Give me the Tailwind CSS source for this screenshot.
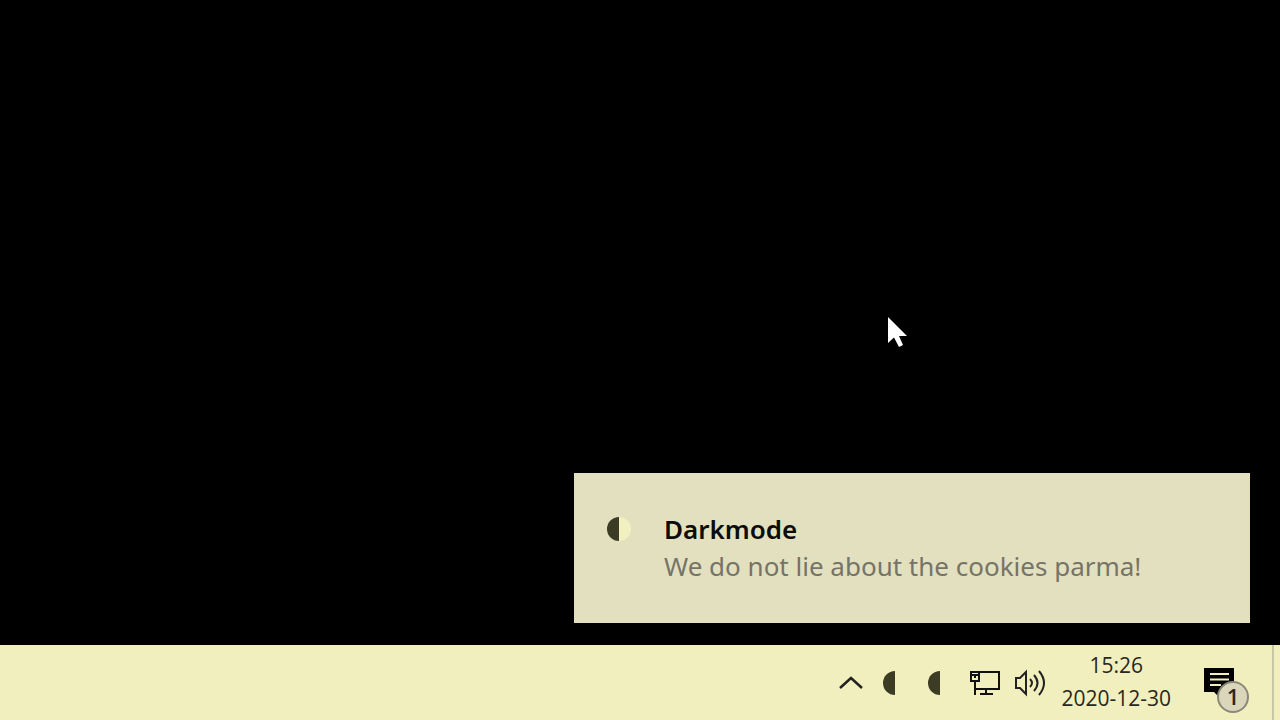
<!DOCTYPE html>
<html lang="en">
<head>
<meta charset="utf-8">
<title>Darkmode notification</title>
<script src="https://cdn.jsdelivr.net/npm/@tailwindcss/browser@4"></script>
</head>
<body class="min-h-screen bg-black font-['Open_Sans','Noto_Sans',sans-serif] flex flex-col">
<main class="relative flex-1 flex flex-col items-end justify-end pr-[30px] pb-[22px]">
  <svg class="absolute left-[887px] top-[316px]" width="21" height="32" viewBox="0 0 21 32" aria-hidden="true"><path d="M1 1V27L7 21.500L12 31L16 29L12 20H20Z" fill="#fff"/></svg>
  <section class="w-full max-w-[676px] min-h-[150px] bg-[#e3e0c0] flex items-start pl-[33px] pt-[38px]" role="status">
    <svg class="mt-[6px] shrink-0" width="24" height="24" viewBox="0 0 24 24" aria-hidden="true"><path d="M12 0A12 12 0 0 1 12 24Z" fill="#f2efc0"/><path d="M12 0A12 12 0 0 0 12 24Z" fill="#3c3b24"/></svg>
    <div class="ml-[33px] font-['Noto_Sans',sans-serif] text-[26px] leading-[37px] whitespace-nowrap">
      <h1 class="font-semibold text-[#0c0c0a]">Darkmode</h1>
      <p class="text-[#757466]">We do not lie about the cookies parma!</p>
    </div>
  </section>
</main>
<footer class="h-[75px] bg-[#f2efbe] flex items-center justify-end text-[#282820]">
  <button class="mr-[20px]" aria-label="Show hidden icons"><svg class="block" width="24" height="16" viewBox="0 0 24 16" fill="none" stroke="#222" stroke-width="2.500"><path d="M1 13L12 3L23 13"/></svg></button>
  <button class="mr-[21px]" aria-label="Darkmode"><svg class="block" width="24" height="24" viewBox="0 0 24 24"><path d="M12 0A12 12 0 0 0 12 24Z" fill="#3c3b24"/></svg></button>
  <button class="mr-[17px]" aria-label="Darkmode"><svg class="block" width="24" height="24" viewBox="0 0 24 24"><path d="M12 0A12 12 0 0 0 12 24Z" fill="#3c3b24"/></svg></button>
  <button class="mr-[13px]" aria-label="Network"><svg class="block" width="32" height="26" viewBox="0 0 32 26" fill="none" stroke="#111" stroke-width="2"><path d="M10 2H30V19H6M17 19V24M11 24H24M2 2H10V11H2ZM2 5H10M6 5V8M6 11V25"/></svg></button>
  <button class="mr-[15px]" aria-label="Volume"><svg class="block" width="32" height="28" viewBox="0 0 32 28" fill="none" stroke="#222" stroke-width="2"><path d="M2 9H6L12 3V25L6 19H2ZM16 10Q20 14 16 18M20 6Q27 14 20 22M25 2Q35 14 25 26"/></svg></button>
  <button class="mr-[32px] pb-px text-[21px] leading-[33px] text-center"><time datetime="2020-12-30T15:26"><span class="block">15:26</span><span class="block">2020-12-30</span></time></button>
  <button class="relative mt-[14px] mr-[23px]" aria-label="Notifications, 1 new"><svg class="block" width="46" height="46" viewBox="0 0 46 46"><path d="M1 1H31V25H16V30L11 25H1Z" fill="#000"/><path d="M7 7H26M7 12.500H26M7 18H18" stroke="#f2efbe" stroke-width="2"/><circle cx="30" cy="30" r="15" fill="#d9d6bc" stroke="#8a8878" stroke-width="2"/></svg><span class="absolute left-[15px] top-[14px] w-[30px] text-center text-[22px] leading-[30px] font-semibold">1</span></button>
  <div class="w-2 self-stretch border-l-2 border-[#c8c6a8]"></div>
</footer>
</body>
</html>
